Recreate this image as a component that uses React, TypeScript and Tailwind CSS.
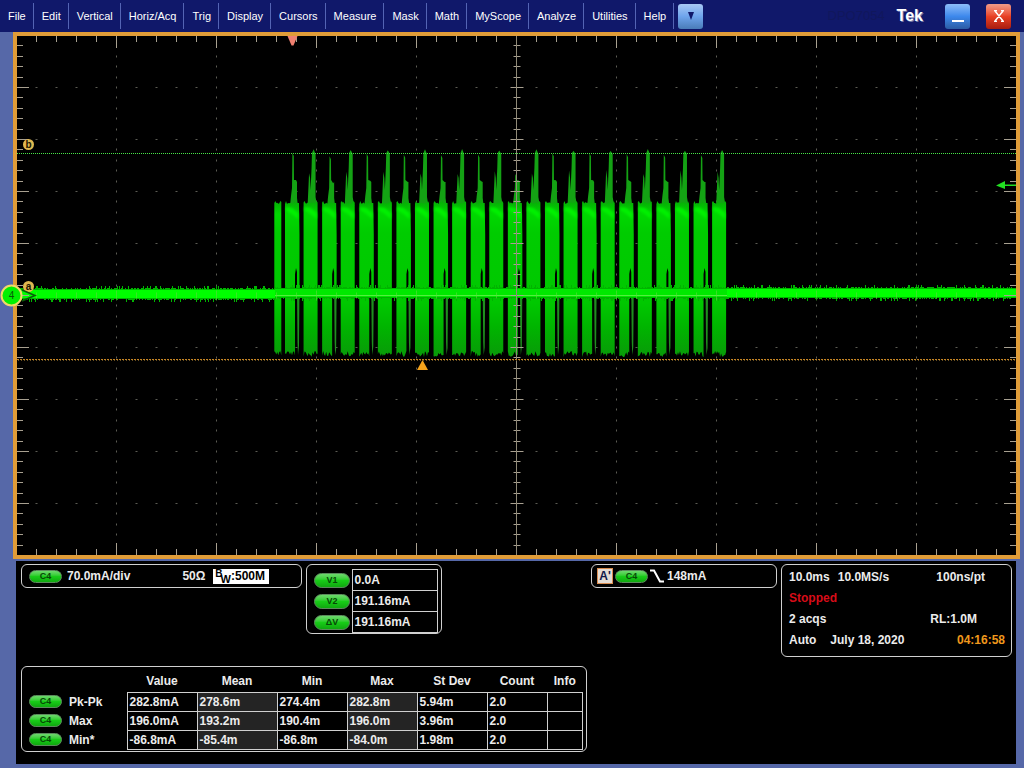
import type { ReactNode } from "react";
import clsx from "clsx";

const MENU = [
  "File", "Edit", "Vertical", "Horiz/Acq", "Trig", "Display", "Cursors",
  "Measure", "Mask", "Math", "MyScope", "Analyze", "Utilities", "Help",
];

const CURSORS = [
  { name: "V1", value: "0.0A" },
  { name: "V2", value: "191.16mA" },
  { name: "ΔV", value: "191.16mA" },
];

const COLUMNS = ["Value", "Mean", "Min", "Max", "St Dev", "Count", "Info"];

const MEASUREMENTS = [
  { name: "Pk-Pk", values: ["282.8mA", "278.6m", "274.4m", "282.8m", "5.94m", "2.0", ""] },
  { name: "Max", values: ["196.0mA", "193.2m", "190.4m", "196.0m", "3.96m", "2.0", ""] },
  { name: "Min*", values: ["-86.8mA", "-85.4m", "-86.8m", "-84.0m", "1.98m", "2.0", ""] },
];

// graticule bounds, in svg units
const LEFT = 17;
const RIGHT = 1016;
const TOP = 36;
const BOTTOM = 555;
const MID_X = 516.5;
const MID_Y = 295.5;

// repeatable pseudo noise in 0..1
function noise(n: number) {
  const v = Math.sin(n * 12.9898) * 43758.5453;
  return v - Math.floor(v);
}

function gridPaths() {
  let dots = "";
  let ticks = "";
  let axis = "";
  for (let i = 1; i < 50; i++) {
    const x = 16.5 + i * 20;
    const len = i % 5 === 0 ? 12 : 6;
    ticks += `M${x} ${TOP}v${len}M${x} ${BOTTOM}v${-len}`;
    if (x !== MID_X) {
      const half = i % 5 === 0 ? 5 : 3;
      axis += `M${x} ${MID_Y - half}v${half * 2}`;
    }
    for (let j = 1; j < 10; j++) {
      if (i % 5 !== 0) dots += `M${x - 1} ${35.5 + j * 52}h2`;
    }
  }
  for (let j = 1; j < 50; j++) {
    const y = Math.round(35 + j * 10.4) + 0.5;
    const len = j % 5 === 0 ? 12 : 6;
    ticks += `M${LEFT} ${y}h${len}M${RIGHT} ${y}h${-len}`;
    ticks += `M${MID_X - len / 2} ${y}h${len + 1}`;
    for (let i = 1; i < 10; i++) {
      if (i !== 5) dots += `M${16.5 + i * 100} ${y - 1}v2`;
    }
  }
  return { dots, ticks, axis };
}

function baseline(from: number, to: number, top: number, bottom: number) {
  let fuzz = "";
  for (let x = from; x < to; x++) {
    const up = noise(x) > 0.85 ? 3 : noise(x) > 0.45 ? 1 : 0;
    const down = noise(x + 500) > 0.88 ? 3 : noise(x + 500) > 0.5 ? 1 : 0;
    fuzz += `M${x + 0.5} ${top - up}V${bottom + down}`;
  }
  const band = `M${from} ${top + 1}H${to}V${bottom - 1}H${from}Z`;
  return { band, fuzz };
}

function burstPaths() {
  let body = "";
  let peaks = "";
  let glow = "";
  let strips = "";
  const block = (x0: number, w: number, seed: number, top = 204) => {
    let d = `M${x0} ${top + 2}`;
    for (let k = 0; k <= w; k++) {
      const lift = k === 1 || k === w - 1 ? 3 : noise(seed + k) * 2;
      d += `L${x0 + k} ${top - lift}`;
    }
    for (let k = w; k >= 0; k--) {
      d += `L${x0 + k} ${351 + noise(seed + k + 70) * 6}`;
    }
    return d + "Z";
  };
  body += block(274.3, 7, 3);
  for (let i = 0; i < 24; i++) {
    const x = 285 + i * 18.57;
    const wobble = noise(i * 7) * 4;
    if (i % 2 === 0) {
      const apex = i === 12 ? 174 : 153 + wobble;
      body += block(x, 10, i * 31);
      body += `M${x + 9} 203H${x + 14}L${x + 14.5} 235V292H${x + 12}V272L${x + 11} 268L${x + 10} 274V292H${x + 9}Z`;
      strips += `M${x + 12} 290H${x + 14.5}L${x + 14} ${346 + wobble}L${x + 13} 355L${x + 12.5} 342Z`;
      peaks += `M${x + 5} 206L${x + 6} 196L${x + 7} 188L${x + 7.4} ${apex}L${x + 8.8} ${apex + 3}L${x + 9} 180L${x + 11} ${180 + wobble}L${x + 12} 182L${x + 12} 198L${x + 13} 206Z`;
    } else {
      body += block(x, 14, i * 31);
      peaks += `M${x + 4} 206L${x + 5.5} ${174 - wobble}L${x + 6.5} 178L${x + 7} 190L${x + 8} 168L${x + 8.4} 153L${x + 10} ${149 + wobble / 2}L${x + 12} 154L${x + 12} 197L${x + 13.5} 206Z`;
    }
    glow += `M${x + 1} 207L${x + 7} 208L${x + 13} 213V219L${x + 7} 214L${x + 1} 211Z`;
  }
  return { body, peaks, glow, strips };
}

const grid = gridPaths();
const bursts = burstPaths();
const before = baseline(LEFT, 275, 289, 299);
const between = baseline(275, 727, 288, 298);
const after = baseline(727, RIGHT, 288, 298);

function Waveform() {
  return (
    <svg viewBox="17 36 999 519" className="block w-full h-auto overflow-visible" role="img" aria-label="Channel 4 waveform">
      <defs>
        <linearGradient id="burst" gradientUnits="userSpaceOnUse" x1="0" x2="0" y1="202" y2="355">
          <stop offset="0" stopColor="#06b006" />
          <stop offset="0.08" stopColor="#00d800" />
          <stop offset="0.2" stopColor="#00cc00" />
          <stop offset="0.66" stopColor="#00c800" />
          <stop offset="0.82" stopColor="#00b400" />
          <stop offset="1" stopColor="#089c08" />
        </linearGradient>
        <filter id="soft" x="-5%" y="-30%" width="110%" height="160%">
          <feGaussianBlur stdDeviation="1" />
        </filter>
      </defs>

      <path d={grid.dots} stroke="#5c5c54" strokeWidth="1" />

      <path d={bursts.peaks} fill="#14a214" />
      <path d={bursts.body} fill="url(#burst)" />
      <path d={bursts.strips} fill="#1f8f1f" />
      <path d={bursts.glow} fill="#00f000" filter="url(#soft)" />
      {[before, between, after].map((line, i) => (
        <g key={i}>
          <path d={line.fuzz} stroke="#00b400" strokeWidth="1" />
          <path d={line.band} fill={i === 1 ? "#00e800" : "#00ff00"} />
        </g>
      ))}
      <path d="M275 295.5H727" stroke="#52f03c" />
      <path d={grid.axis} stroke="#5fd83c" strokeWidth="1" opacity="0.6" />

      <path d={grid.ticks} stroke="#a8a090" strokeWidth="1" />
      <path d={`M${MID_X} ${TOP}V${BOTTOM}`} stroke="#908a78" strokeWidth="1" />

      <path d="M17 153.5H1016" stroke="#48e848" strokeDasharray="1 1" />
      <path d="M17 359.5H1016" stroke="#c48424" strokeDasharray="2 1" />
      <path d="M18 360.5H1016" stroke="#6a5020" strokeDasharray="1 2" />

      <path d="M287.5 36H297.5L293.5 45.5H291.5Z" fill="#f08070" />
      <path d="M422.5 360L428 370H417Z" fill="#f5a31c" />
      <path d="M1016 184.5H1005V181L996 185.5L1005 189V186H1016Z" fill="#22e022" />

      {[
        { name: "b", y: 144.5 },
        { name: "a", y: 286.5 },
      ].map((mark) => (
        <g key={mark.name}>
          <circle cx="28.5" cy={mark.y} r="5.5" fill="#e0b850" />
          <text x="28.5" y={mark.y + 3.5} textAnchor="middle" fill="#201400" className="font-['Liberation_Sans'] text-[10px] font-bold">
            {mark.name}
          </text>
        </g>
      ))}
      <path d="M22 290L35 295.5L22 301" fill="none" stroke="#0a5a0a" strokeWidth="1.5" />
      <circle cx="11.5" cy="295.5" r="10" fill="#00f000" stroke="#f0d868" strokeWidth="2" />
      <text x="11.5" y="299" textAnchor="middle" fill="#0a5a0a" className="font-['Liberation_Sans'] text-[10px]">
        4
      </text>
    </svg>
  );
}

function Pill({ children, wide }: { children: ReactNode; wide?: boolean }) {
  return (
    <span
      className={clsx(
        "flex shrink-0 items-center justify-center rounded-full border border-[#5c8a5c] bg-linear-to-b from-[#6cd86c] via-[#18cc18] to-[#0fa80f] text-[9px] leading-none font-bold text-[#064806]",
        wide ? "h-[15px] w-9" : "h-[13px] w-[33px]"
      )}
    >
      {children}
    </span>
  );
}

function Panel({ className, children }: { className?: string; children: ReactNode }) {
  return <section className={clsx("rounded-md border border-[#d0d0d0]", className)}>{children}</section>;
}

function MenuBar() {
  return (
    <header className="flex h-8 shrink-0 items-center bg-[#10186a] text-white">
      <nav className="flex items-center">
        {MENU.map((item) => (
          <button key={item} className="h-[26px] border-r border-[#5464b4] pr-[7px] pl-2 text-[11px] leading-none whitespace-nowrap">
            {item}
          </button>
        ))}
      </nav>
      <button
        aria-label="More menus"
        className="ml-1 flex size-[25px] shrink-0 items-center justify-center rounded-[3px] bg-linear-to-b from-[#a8c8f4] via-[#6ea4ec] to-[#4a7cb8]"
      >
        <svg viewBox="0 0 8 8" className="size-2">
          <path d="M1 0H7L4 8Z" fill="#10186a" />
        </svg>
      </button>
      <span className="ml-auto text-[13px] text-[#10175c]">DPO7054</span>
      <span className="ml-3 text-base font-bold [text-shadow:1px_1px_0_#7078a8]">Tek</span>
      <button
        aria-label="Minimize"
        className="ml-[22px] flex size-[25px] items-end justify-center rounded-[3px] bg-linear-to-b from-[#8cbcf8] via-[#3c88ec] to-[#2c5ca4] pb-[7px]"
      >
        <span className="h-0.5 w-3 bg-white" />
      </button>
      <button
        aria-label="Close"
        className="mr-[13px] ml-4 flex size-[25px] items-center justify-center rounded-[3px] bg-linear-to-b from-[#f09a88] via-[#e84024] to-[#a81c10]"
      >
        <svg viewBox="0 0 10 12" className="h-3 w-2.5">
          <path d="M1 1L9 11M9 1L1 11M0 0.5H3M7 0.5H10M0 11.5H3M7 11.5H10" stroke="#fff" strokeWidth="1.5" />
        </svg>
      </button>
    </header>
  );
}

function AcquisitionPanel() {
  return (
    <Panel className="w-[231px] pt-0.5 pr-1.5 pb-[5px] pl-[7px] leading-[21px]">
      <div className="flex gap-2">
        <span>10.0ms</span>
        <span>10.0MS/s</span>
        <span className="ml-auto pr-5">100ns/pt</span>
      </div>
      <div className="text-[#d80c18]">Stopped</div>
      <div className="flex justify-between">
        <span>2 acqs</span>
        <span className="pr-7">RL:1.0M</span>
      </div>
      <div className="flex gap-3.5">
        <span>Auto</span>
        <span>July 18, 2020</span>
        <span className="ml-auto text-[#f0981c]">04:16:58</span>
      </div>
    </Panel>
  );
}

function MeasurementTable() {
  return (
    <Panel className="mt-[9px] w-[566px] pr-[3px] pb-px pl-[7px]">
      <table className="w-full table-fixed border-collapse">
        <colgroup>
          <col className="w-[98px]" />
          <col className="w-[70px]" />
          <col className="w-[80px]" />
          <col className="w-[70px]" />
          <col className="w-[70px]" />
          <col className="w-[70px]" />
          <col className="w-[60px]" />
          <col />
        </colgroup>
        <thead>
          <tr className="h-[25px]">
            <td />
            {COLUMNS.map((column) => (
              <th key={column} scope="col" className="pt-1 text-center">
                {column}
              </th>
            ))}
          </tr>
        </thead>
        <tbody>
          {MEASUREMENTS.map((row) => (
            <tr key={row.name} className="h-[19px]">
              <th scope="row" className="text-left">
                <span className="flex items-center gap-[7px]">
                  <Pill>C4</Pill>
                  {row.name}
                </span>
              </th>
              {row.values.map((value, i) => (
                <td
                  key={i}
                  className={clsx("border border-[#d0d0d0] pl-0.5", (i === 1 || i === 3) && "bg-[#242424]")}
                >
                  {value}
                </td>
              ))}
            </tr>
          ))}
        </tbody>
      </table>
    </Panel>
  );
}

function Readouts() {
  return (
    <footer className="mt-0.5 mr-2 mb-1 ml-4 flex-1 bg-black pt-[3px] pr-1 pl-[5px] text-[12px] leading-[18px] font-bold text-[#ececec]">
      <div className="flex items-start gap-1">
        <Panel className="flex h-6 w-[281px] items-center pr-8 pl-[7px]">
          <Pill>C4</Pill>
          <span className="ml-[5px]">70.0mA/div</span>
          <span className="ml-auto">50Ω</span>
          <span className="ml-2 flex h-[15px] items-center bg-white pr-1 pl-0.5 leading-none text-black">
            <span className="self-start text-[10px] leading-[9px]">B</span>
            <span className="-ml-0.5 self-end text-[11px] leading-[10px]">W</span>
            :500M
          </span>
        </Panel>

        <Panel className="w-[136px] pt-1 pr-[3px] pl-[7px]">
          <table className="w-full border-collapse">
            <tbody>
              {CURSORS.map((cursor) => (
                <tr key={cursor.name} className="h-[21px]">
                  <th scope="row" className="w-[38px]">
                    <Pill wide>{cursor.name}</Pill>
                  </th>
                  <td className="border border-[#d0d0d0] pl-0.5">{cursor.value}</td>
                </tr>
              ))}
            </tbody>
          </table>
        </Panel>

        <Panel className="ml-auto flex h-6 w-[186px] items-center pl-[5px]">
          <span className="flex size-4 items-center justify-center border border-[#d88c50] bg-[#e4dcd4] leading-none text-[#10184a]">
            A'
          </span>
          <span className="ml-0.5">
            <Pill>C4</Pill>
          </span>
          <svg viewBox="0 0 14 14" className="ml-0.5 size-3.5" fill="none" stroke="#fff" strokeWidth="2">
            <path d="M0 1.5H4L10 12.5H14" />
          </svg>
          <span className="ml-[3px]">148mA</span>
        </Panel>

        <AcquisitionPanel />
      </div>

      <MeasurementTable />
    </footer>
  );
}

export default function App() {
  return (
    <div className="flex min-h-screen flex-col bg-[#5668a8] font-['Liberation_Sans',Arial,sans-serif]">
      <MenuBar />
      <main className="mr-1 ml-[13px] border-4 border-[#e09c38] bg-black">
        <Waveform />
      </main>
      <Readouts />
    </div>
  );
}
